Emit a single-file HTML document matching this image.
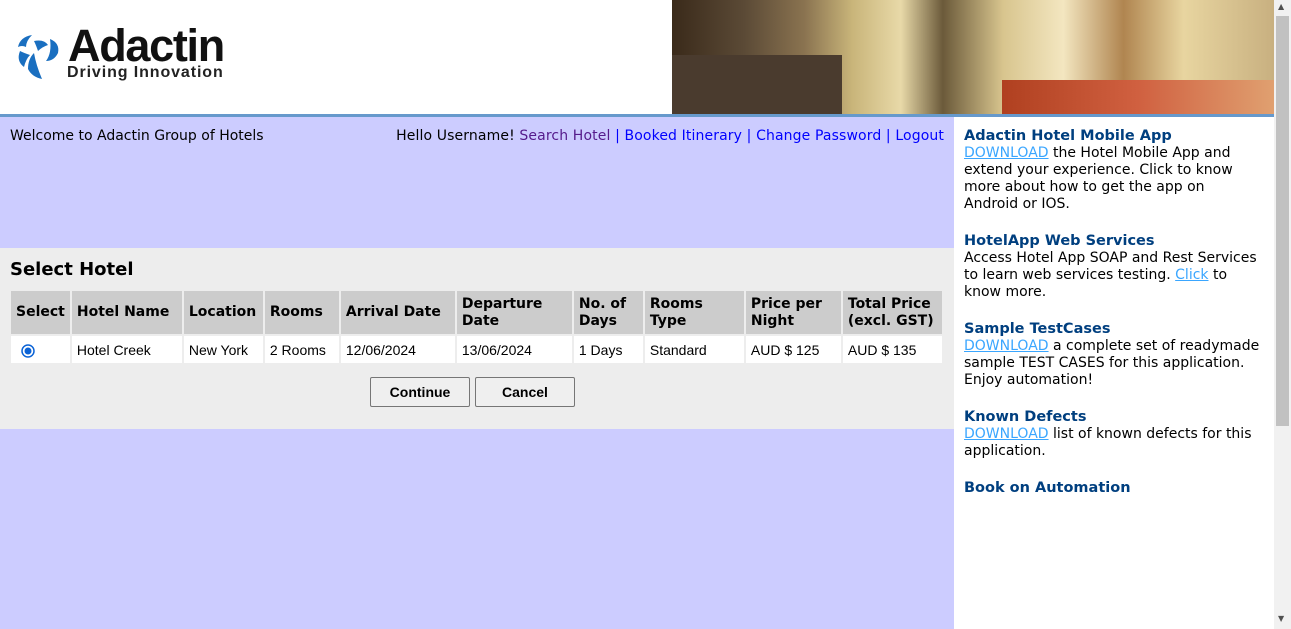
<!DOCTYPE html>
<html><head><meta charset="utf-8"><style>
*{margin:0;padding:0;box-sizing:border-box}
body{width:1291px;height:629px;overflow:hidden;font-family:"DejaVu Sans",Verdana,sans-serif;font-size:14px;background:#fff;position:relative}
#hdr{position:absolute;left:0;top:0;width:1274px;height:114px;background:#fff}
#line{position:absolute;left:0;top:114px;width:1274px;height:3px;background:#6699cc}
#img{position:absolute;left:672px;top:0;width:602px;height:114px;background:linear-gradient(90deg,#3a2a1a 0%,#5b4a36 12%,#8a7350 22%,#c9b57a 30%,#e8d9a8 38%,#6b5a3a 45%,#d8c58e 55%,#f3e6c0 65%,#b08550 75%,#e8d5a0 85%,#c8b080 100%)}
#img .desk{position:absolute;left:0;top:55px;width:170px;height:59px;background:#4a3b2e}
#img .floor{position:absolute;left:330px;top:80px;width:272px;height:34px;background:linear-gradient(90deg,#b04020,#d06040,#e0a070)}
#left{position:absolute;left:0;top:117px;width:954px;height:512px;background:#ccccff}
#right{position:absolute;left:954px;top:117px;width:320px;height:512px;background:#fff}
#scroll{position:absolute;left:1274px;top:0;width:17px;height:629px;background:#f1f1f1}
#thumb{position:absolute;left:1276px;top:16px;width:13px;height:410px;background:#c1c1c1}
.t{position:absolute;white-space:nowrap}
a{text-decoration:none}
#gray{position:absolute;left:0;top:248px;width:954px;height:181px;background:#ededed}
table{position:absolute;left:9px;top:289px;border-collapse:collapse}
td,th{border:2px solid #ededed;text-align:left;padding:0 5px}
th{background:#cccccc;font-weight:bold;font-size:14px;height:45px;line-height:17px}
td{background:#fff;font-family:"Liberation Sans",Arial,sans-serif;font-size:14px;height:29px}
.btn{position:absolute;top:377px;width:100px;height:30px;border:1px solid #767676;background:#efefef;border-radius:2px;font-family:"Liberation Sans",Arial,sans-serif;font-weight:bold;font-size:14px;text-align:center;line-height:28px}
#right .h{color:#003f7f;font-weight:bold;font-size:14.5px;line-height:17px}
#right .h2{margin-top:20px}
#right p{font-size:14px;line-height:17px;color:#000}
#right .dl{color:#3aa6ff;text-decoration:underline}
</style></head><body>
<div id="hdr">
<svg style="position:absolute;left:14px;top:31px" width="52" height="52" viewBox="0 0 52 52">
<path d="M4 16 Q6 6 18 4 Q12 10 12 16 Q8 14 4 16Z" fill="#1a6fc0"/>
<path d="M6 20 Q2 30 10 36 Q12 28 16 24 Q10 22 6 20Z" fill="#1a6fc0"/>
<path d="M20 22 Q22 34 28 48 Q18 46 14 38 Q14 28 20 22Z" fill="#1a6fc0"/>
<path d="M36 8 Q46 12 44 22 Q40 30 32 30 Q38 22 36 8Z" fill="#1a6fc0"/>
<path d="M20 10 Q30 8 34 14 Q28 16 24 20 Q22 14 20 10Z" fill="#1a6fc0"/>
</svg>
<div class="t" style="left:68px;top:23px;font-family:'Liberation Sans',Arial,sans-serif;font-weight:bold;font-size:45px;letter-spacing:-1.3px;line-height:46px;color:#111">Adactin</div>
<div class="t" style="left:67px;top:64px;font-family:'Liberation Sans',Arial,sans-serif;font-weight:bold;font-size:16px;letter-spacing:0.9px;color:#222">Driving Innovation</div>
</div>
<div id="img"><div class="desk"></div><div class="floor"></div></div>
<div id="line"></div>
<div id="left"></div>
<div id="gray"></div>
<div class="t" style="left:10px;top:128px">Welcome to Adactin Group of Hotels</div>
<div class="t" style="right:347px;top:128px;letter-spacing:0.12px">Hello Username! <a style="color:#551a8b">Search Hotel</a> <span style="color:#00f">|</span> <a style="color:#00f">Booked Itinerary</a> <span style="color:#00f">|</span> <a style="color:#00f">Change Password</a> <span style="color:#00f">|</span> <a style="color:#00f">Logout</a></div>
<div class="t" style="left:10px;top:259px;font-weight:bold;font-size:18px">Select Hotel</div>
<table>
<tr><th style="width:60px">Select</th><th style="width:112px">Hotel Name</th><th style="width:81px">Location</th><th style="width:76px">Rooms</th><th style="width:116px">Arrival Date</th><th style="width:117px">Departure<br>Date</th><th style="width:71px">No. of<br>Days</th><th style="width:101px">Rooms<br>Type</th><th style="width:97px">Price per<br>Night</th><th style="width:101px">Total Price<br>(excl. GST)</th></tr>
<tr><td><svg width="14" height="14" style="margin-left:5px;vertical-align:middle"><circle cx="7" cy="7" r="6" fill="#fff" stroke="#0b63d6" stroke-width="1.5"/><circle cx="7" cy="7" r="3.5" fill="#0b63d6"/></svg></td><td>Hotel Creek</td><td>New York</td><td>2 Rooms</td><td>12/06/2024</td><td>13/06/2024</td><td>1 Days</td><td>Standard</td><td>AUD $ 125</td><td>AUD $ 135</td></tr>
</table>
<div class="btn" style="left:370px">Continue</div>
<div class="btn" style="left:475px">Cancel</div>
<div id="right">
<div style="position:absolute;left:10px;top:11px;width:305px">
<div class="h">Adactin Hotel Mobile App</div>
<p><span class="dl">DOWNLOAD</span> the Hotel Mobile App and extend your experience. Click to know more about how to get the app on<br>Android or IOS.</p>
<div class="h h2">HotelApp Web Services</div>
<p>Access Hotel App SOAP and Rest Services to learn web services testing. <span class="dl">Click</span> to<br>know more.</p>
<div class="h h2">Sample TestCases</div>
<p><span class="dl">DOWNLOAD</span> a complete set of readymade sample TEST CASES for this application. Enjoy automation!</p>
<div class="h h2">Known Defects</div>
<p><span class="dl">DOWNLOAD</span> list of known defects for this application.</p>
<div class="h h2">Book on Automation</div>
</div></div>
<div id="scroll"></div><div id="thumb"></div>
<div class="t" style="left:1278px;top:2px;font-size:8px;color:#505050">▲</div>
<div class="t" style="left:1278px;top:614px;font-size:8px;color:#505050">▼</div>
</body></html>
